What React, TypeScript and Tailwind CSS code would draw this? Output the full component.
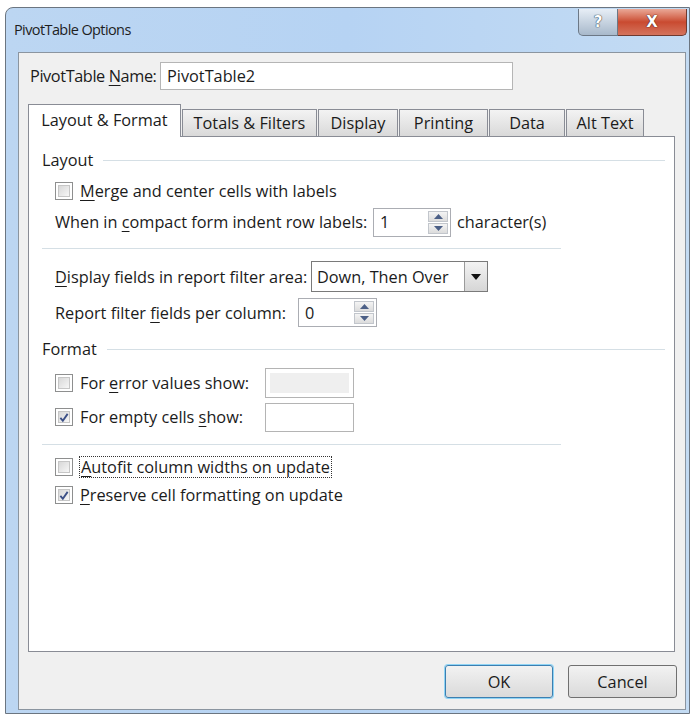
import type { ReactNode } from "react"

const font = { fontFamily: '"Open Sans", "Noto Sans", sans-serif' }

function Key({ children }: { children: ReactNode }) {
    return <span className="underline underline-offset-[3px] decoration-1">{children}</span>
}

function Checkbox({ checked }: { checked?: boolean }) {
    return (
        <div className="w-[18px] h-[18px] shrink-0 border border-[#8e8f8f] bg-white p-[2px]">
            <div className="w-full h-full border border-[#c6c6c6] bg-gradient-to-br from-[#d8d8d8] to-[#f7f7f7] flex items-center justify-center">
                {checked && (
                    <svg width="11" height="11" viewBox="0 0 11 11">
                        <path d="M1.5 6 L4.2 9 L9.5 1.5" fill="none" stroke="#3b4f86" strokeWidth="2" />
                    </svg>
                )}
            </div>
        </div>
    )
}

function Spinner({ value, width }: { value: string; width: string }) {
    return (
        <div className={`${width} h-[29px] flex border border-[#abadb3] bg-white`}>
            <div className="flex-1 flex items-center pl-[6px]">{value}</div>
            <div className="w-[24px] flex flex-col p-[2px] gap-[1px]">
                <div className="flex-1 flex items-center justify-center border border-[#c2c6cc] bg-gradient-to-b from-[#f4f4f4] to-[#dcdcdc]">
                    <svg width="9" height="5" viewBox="0 0 9 5"><path d="M0 5 L4.5 0 L9 5Z" fill="#4b5f86" /></svg>
                </div>
                <div className="flex-1 flex items-center justify-center border border-[#c2c6cc] bg-gradient-to-b from-[#f4f4f4] to-[#dcdcdc]">
                    <svg width="9" height="5" viewBox="0 0 9 5"><path d="M0 0 L4.5 5 L9 0Z" fill="#4b5f86" /></svg>
                </div>
            </div>
        </div>
    )
}

function GroupHeading({ label }: { label: string }) {
    return (
        <div className="h-[22px] flex items-center gap-[10px]">
            <span>{label}</span>
            <div className="flex-1 h-px bg-[#d5dfe5]" />
        </div>
    )
}

const tabs = [
    { label: "Totals & Filters", w: "w-[135px]" },
    { label: "Display", w: "w-[80px]" },
    { label: "Printing", w: "w-[89px]" },
    { label: "Data", w: "w-[76px]" },
    { label: "Alt Text", w: "w-[78px]" },
]

export default function App() {
    return (
        <div className="w-[690px] h-[715px] bg-white overflow-hidden text-[16.3px] leading-[22px] text-[#1b1b1b] whitespace-nowrap" style={font}>
            {/* window frame */}
            <div className="ml-[5px] mt-[7px] w-[685px] h-[707px] rounded-tl-[8px] border border-[#6b7580] bg-gradient-to-r from-[#bcd6f2] via-[#b6d3f3] to-[#c3dbf3] flex flex-col pl-[12px] pb-[3px]">
                {/* title bar */}
                <div className="h-[44px] flex items-start shrink-0">
                    <div className="-ml-[4px] pt-[11px] text-[14.5px] tracking-[-0.6px] text-[#1e1e1e]">PivotTable Options</div>
                    <div className="ml-auto mr-[2px] flex mt-[1px]">
                        <div className="w-[40px] h-[27px] rounded-bl-[5px] border border-[#6c7886] border-t-0 bg-gradient-to-b from-[#e7eef6] to-[#a8b9cb] flex items-center justify-center">
                            <span className="text-white text-[15px] font-bold [text-shadow:0_0_1px_#1d2a3a,0_0_1px_#1d2a3a]" style={{ fontFamily: '"DejaVu Sans", sans-serif' }}>?</span>
                        </div>
                        <div className="w-[69px] h-[27px] rounded-br-[5px] border border-[#6e3a30] border-t-0 border-l-0 bg-gradient-to-b from-[#e9a897] via-[#c94a30] to-[#d4735c] flex items-center justify-center">
                            <span className="text-white text-[15px] font-bold [text-shadow:0_0_1px_#3d1208,0_0_1px_#3d1208]" style={{ fontFamily: '"DejaVu Sans", sans-serif' }}>X</span>
                        </div>
                    </div>
                </div>

                {/* client area */}
                <div className="w-[668px] h-[658px] border border-[#8b95a0] bg-[#f0f0f0] flex flex-col">
                    <div className="mt-[9px] ml-[11px] h-[28px] flex items-center">
                        <span className="w-[130px] shrink-0 tracking-[-0.4px]">PivotTable <Key>N</Key>ame:</span>
                        <div className="w-[353px] h-[28px] border border-[#b5b5b5] bg-white flex items-center pl-[6px]">PivotTable2</div>
                    </div>

                    {/* tabs */}
                    <div className="mt-[14px] ml-[9px] flex items-end h-[32px] relative z-10">
                        <div className="w-[153px] h-[33px] -mb-px border border-b-0 border-[#898c95] bg-white flex items-center justify-center pb-[2px]">
                            Layout &amp; Format
                        </div>
                        {tabs.map((t) => (
                            <div key={t.label} className={`${t.w} ml-[1px] h-[27px] border border-b-0 border-[#898c95] bg-gradient-to-b from-[#f3f3f3] to-[#d9d9d9] flex items-center justify-center`}>
                                {t.label}
                            </div>
                        ))}
                    </div>

                    {/* tab page */}
                    <div className="ml-[9px] w-[647px] h-[516px] border border-[#898c95] bg-white pl-[13px] pr-[9px] pt-[12px] flex flex-col">
                        <GroupHeading label="Layout" />
                        <div className="pl-[13px] flex flex-col">
                            <div className="mt-[9px] h-[22px] flex items-center gap-[7px]">
                                <Checkbox />
                                <span><Key>M</Key>erge and center cells with labels</span>
                            </div>
                            <div className="mt-[6px] h-[28px] flex items-center">
                                <span className="w-[318px] shrink-0">When in <Key>c</Key>ompact form indent row labels:</span>
                                <Spinner value="1" width="w-[78px]" />
                                <span className="ml-[6px]">character(s)</span>
                            </div>
                        </div>
                        <div className="mt-[12px] w-[519px] h-px bg-[#d5dfe5]" />
                        <div className="pl-[13px] flex flex-col">
                            <div className="mt-[12px] h-[31px] flex items-center">
                                <span className="w-[256px] shrink-0"><Key>D</Key>isplay fields in report filter area:</span>
                                <div className="w-[177px] h-[31px] border border-[#7a7a7a] bg-white flex items-center">
                                    <span className="flex-1 pl-[5px]">Down, Then Over</span>
                                    <div className="w-[23px] h-full border-l border-[#9a9a9a] bg-gradient-to-b from-[#f3f3f3] to-[#d6d6d6] flex items-center justify-center">
                                        <svg width="10" height="6" viewBox="0 0 10 6"><path d="M0 0 L5 6 L10 0Z" fill="#111" /></svg>
                                    </div>
                                </div>
                            </div>
                            <div className="mt-[6px] h-[29px] flex items-center">
                                <span className="w-[243px] shrink-0">Report filter <Key>f</Key>ields per column:</span>
                                <Spinner value="0" width="w-[79px]" />
                            </div>
                        </div>
                        <div className="mt-[11px]">
                            <GroupHeading label="Format" />
                        </div>
                        <div className="pl-[13px] flex flex-col">
                            <div className="mt-[8px] h-[30px] flex items-center">
                                <div className="w-[210px] shrink-0 flex items-center gap-[7px]">
                                    <Checkbox />
                                    <span>For <Key>e</Key>rror values show:</span>
                                </div>
                                <div className="w-[89px] h-[30px] border border-[#b4b4b4] bg-white p-[4px]">
                                    <div className="w-full h-full bg-[#efefef]" />
                                </div>
                            </div>
                            <div className="mt-[4px] h-[30px] flex items-center">
                                <div className="w-[210px] shrink-0 flex items-center gap-[7px]">
                                    <Checkbox checked />
                                    <span>For empty cells <Key>s</Key>how:</span>
                                </div>
                                <div className="w-[89px] h-[29px] border border-[#b4b4b4] bg-white" />
                            </div>
                        </div>
                        <div className="mt-[12px] w-[519px] h-px bg-[#d5dfe5]" />
                        <div className="pl-[13px] flex flex-col">
                            <div className="mt-[11px] h-[22px] flex items-center gap-[6px]">
                                <Checkbox />
                                <span className="border border-dotted border-[#333] px-[1px] leading-[20px]"><Key>A</Key>utofit column widths on update</span>
                            </div>
                            <div className="mt-[6px] h-[22px] flex items-center gap-[7px]">
                                <Checkbox checked />
                                <span><Key>P</Key>reserve cell formatting on update</span>
                            </div>
                        </div>
                    </div>

                    {/* dialog buttons */}
                    <div className="mt-[13px] ml-[426px] flex gap-[15px]">
                        <div className="w-[108px] h-[33px] rounded-[3px] border border-[#3c7fb1] shadow-[0_0_0_1px_#8fd4f5] bg-gradient-to-b from-[#f2f2f2] to-[#dadada] flex items-center justify-center">
                            OK
                        </div>
                        <div className="w-[109px] h-[33px] rounded-[3px] border border-[#707070] bg-gradient-to-b from-[#f2f2f2] to-[#dadada] flex items-center justify-center">
                            Cancel
                        </div>
                    </div>
                </div>
            </div>
        </div>
    )
}
